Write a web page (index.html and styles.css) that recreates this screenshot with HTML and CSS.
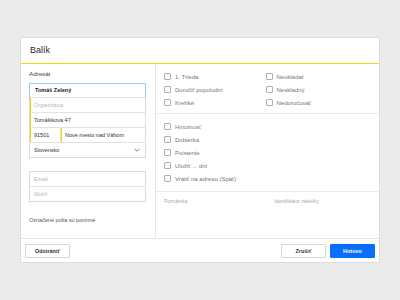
FILE: index.html
```html
<!DOCTYPE html>
<html lang="sk">
<head>
<meta charset="utf-8">
<link rel="stylesheet" href="styles.css">
</head>
<body>
<div class="card">
  <div class="card-head">Balík</div>
  <div class="card-body">
    <div class="left">
      <div class="label">Adresát</div>
      <div class="group">
        <div class="row focus bold">Tomáš Zelený</div>
        <div class="row req ph">Organizácia</div>
        <div class="row req">Tomášikova 47</div>
        <div class="row split">
          <div class="cell zip req">91501</div>
          <div class="cell city req">Nové mesto nad Váhom</div>
        </div>
        <div class="row select">Slovensko
          <svg class="chev" width="6" height="4" viewBox="0 0 6 4"><path d="M0.5 0.8 L3 3.2 L5.5 0.8" fill="none" stroke="#555" stroke-width="0.8"/></svg>
        </div>
      </div>
      <div class="group group2">
        <div class="row ph">Email</div>
        <div class="row ph">Mobil</div>
      </div>
      <div class="note">Označené polia sú povinné</div>
    </div>
    <div class="right">
      <div class="sec sec1">
        <label class="cb"><span class="box"></span>1. Trieda</label>
        <label class="cb"><span class="box"></span>Neukladať</label>
        <label class="cb"><span class="box"></span>Doručiť popoludní</label>
        <label class="cb"><span class="box"></span>Neskladný</label>
        <label class="cb"><span class="box"></span>Krehké</label>
        <label class="cb"><span class="box"></span>Nedoručovať</label>
      </div>
      <div class="sec sec2">
        <label class="cb"><span class="box"></span>Hmotnosť</label>
        <label class="cb"><span class="box"></span>Dobierka</label>
        <label class="cb"><span class="box"></span>Poistenie</label>
        <label class="cb"><span class="box"></span>Uložiť ... dní</label>
        <label class="cb"><span class="box"></span>Vrátiť na adresu (Späť)</label>
      </div>
      <div class="sec sec3">
        <span>Poznámka</span>
        <span>Identifikátor zásielky</span>
      </div>
    </div>
  </div>
  <div class="card-foot">
    <button class="btn">Odstrániť</button>
    <div class="spacer"></div>
    <button class="btn">Zrušiť</button>
    <button class="btn primary">Hotovo</button>
  </div>
</div>
</body>
</html>
```
FILE: styles.css
```css
* { box-sizing: border-box; }
html, body { margin: 0; padding: 0; }
body {
  width: 400px;
  height: 300px;
  background: #ebebeb;
  font-family: "Liberation Sans", Arial, sans-serif;
  color: #333;
  overflow: hidden;
}
.card {
  margin: 37px 20px 0;
  width: 360px;
  height: 226px;
  background: #fff;
  border: 1px solid #dcdcdc;
  display: flex;
  flex-direction: column;
}
.card-head {
  height: 26px;
  padding-left: 9px;
  font-size: 9px;
  line-height: 25px;
  color: #2a2a2a;
  border-bottom: 1px solid #f7d900;
}
.card-body {
  flex: 1;
  display: flex;
  border-bottom: 1px solid #e6e6e6;
}
.left {
  width: 135px;
  border-right: 1px solid #e6e6e6;
  padding: 6px 8px 0 8px;
}
.label {
  font-size: 6.2px;
  line-height: 8px;
  color: #444;
  margin-bottom: 5px;
}
.group {
  width: 117px;
  border: 1px solid #dadada;
  position: relative;
}
.row {
  height: 15px;
  border-top: 1px solid #e2e2e2;
  font-size: 5.5px;
  line-height: 14px;
  padding-left: 4px;
  color: #333;
  position: relative;
}
.row:first-child { border-top: none; height: 14px; }
.row.focus {
  margin: -1px;
  height: 15px;
  border: 1px solid #8fd3f7;
  padding-left: 5px;
  line-height: 13px;
}
.bold { font-weight: bold; color: #222; }
.ph { color: #b8b8b8; }
.req { box-shadow: inset 1px 0 0 #f5d300; }
.row.split { display: flex; padding-left: 0; }
.cell { padding-left: 4px; }
.zip { width: 31px; border-right: 1px solid #e2e2e2; }
.city { flex: 1; }
.select { display: flex; align-items: center; justify-content: space-between; padding-right: 5px; line-height: 14px; }
.chev { display: block; }
.group2 { margin-top: 13px; }
.note {
  margin-top: 15px;
  font-size: 5.5px;
  color: #555;
}
.right { flex: 1; display: flex; flex-direction: column; }
.sec { border-bottom: 1px solid #ececec; padding-left: 8px; }
.sec1 {
  display: grid;
  grid-template-columns: 101.5px 1fr;
  padding-top: 6px;
  padding-bottom: 4px;
}
.sec2 { padding-top: 6px; padding-bottom: 6px; display: flex; flex-direction: column; }
.cb {
  display: flex;
  align-items: center;
  height: 13px;
  font-size: 6px;
  color: #777;
}
.box {
  width: 7px;
  height: 7px;
  border: 1px solid #b0b0b0;
  border-radius: 1px;
  margin-right: 4px;
  flex: none;
}
.sec3 {
  border-bottom: none;
  display: grid;
  grid-template-columns: 110px 1fr;
  padding-top: 6px;
  font-size: 5px;
  line-height: 6px;
  color: #aaa;
}
.card-foot {
  height: 23px;
  display: flex;
  align-items: center;
  padding: 0 4px;
  gap: 4px;
}
.spacer { flex: 1; }
.btn {
  width: 45px;
  height: 14px;
  margin: 0;
  padding: 0;
  border: 1px solid #d6d6d6;
  border-radius: 1px;
  background: #fff;
  font-family: "Liberation Sans", Arial, sans-serif;
  font-size: 5.5px;
  font-weight: bold;
  color: #333;
}
.btn.primary {
  background: #0a6efd;
  border-color: #0a6efd;
  color: #fff;
}
```
